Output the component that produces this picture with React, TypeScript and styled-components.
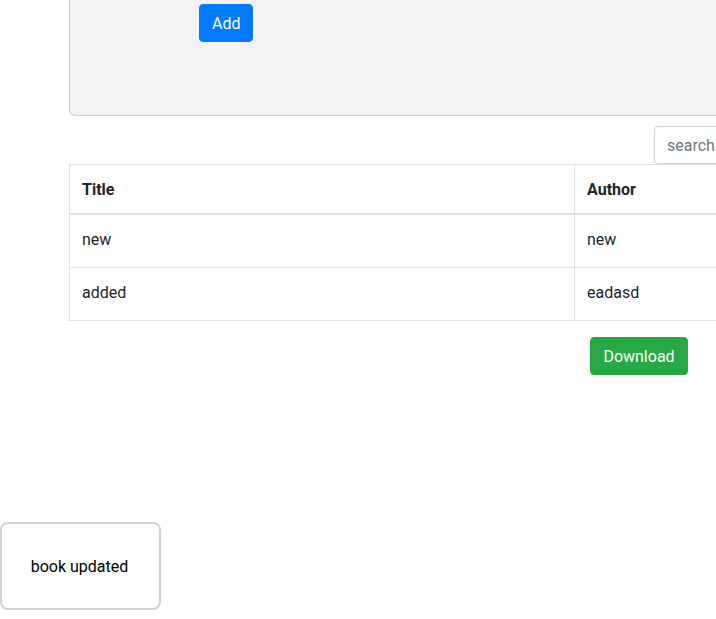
import React from "react";
import styled, { createGlobalStyle } from "styled-components";

const Global = createGlobalStyle`
  html, body { margin: 0; padding: 0; overflow: hidden; background: #fff; }
  body { font-family: Roboto, "Liberation Sans", sans-serif; font-size: 16px; line-height: 1.5; color: #212529; }
  * { box-sizing: border-box; }
`;

const Container = styled.div`
  margin-left: 69px;
  width: 1140px;
  display: flex;
  flex-direction: column;
`;

const Panel = styled.div`
  height: 116px;
  background: #f3f3f3;
  border: 1px solid #d0d0d0;
  border-top: none;
  border-radius: 0 0 6px 6px;
  padding: 4px 0 0 129px;
`;

const Button = styled.button<{ $variant: "primary" | "success" }>`
  font-family: inherit;
  font-size: 16px;
  line-height: 24px;
  padding: 7px 12px 5px;
  border: 1px solid ${(p) => (p.$variant === "primary" ? "#007bff" : "#28a745")};
  background: ${(p) => (p.$variant === "primary" ? "#007bff" : "#28a745")};
  color: #fff;
  border-radius: 4px;
  cursor: pointer;
`;

const SearchRow = styled.div`
  display: flex;
  padding: 10px 0 0 585px;
  height: 48px;
`;

const SearchInput = styled.input`
  width: 200px;
  height: 38px;
  font-family: inherit;
  font-size: 16px;
  padding: 6px 12px;
  border: 1px solid #ced4da;
  border-radius: 4px;
  color: #495057;
  &::placeholder { color: #6c757d; }
`;

const Table = styled.table`
  width: 100%;
  border-collapse: collapse;
  color: #212529;
`;

const Th = styled.th<{ $w?: number }>`
  text-align: left;
  font-weight: 700;
  padding: 13px 12px 11px;
  line-height: 24px;
  border: 1px solid #dee2e6;
  border-bottom: 2px solid #dee2e6;
  width: ${(p) => (p.$w ? `${p.$w}px` : "auto")};
`;

const Td = styled.td`
  padding: 13px 12px 15px;
  line-height: 24px;
  border: 1px solid #dee2e6;
`;

const Footer = styled.div`
  display: flex;
  justify-content: center;
  padding-top: 16px;
`;

const Toast = styled.div`
  position: fixed;
  left: 0;
  bottom: 9px;
  width: 161px;
  height: 88px;
  background: #fff;
  border: 2px solid #d3d3d3;
  border-radius: 8px;
  display: flex;
  align-items: center;
  justify-content: center;
  padding: 2px 2px 0 0;
  font-size: 16px;
  color: #000;
`;

const rows = [
  { title: "new", author: "new" },
  { title: "added", author: "eadasd" },
];

export default function App() {
  return (
    <>
      <Global />
      <Container>
        <Panel>
          <Button $variant="primary">Add</Button>
        </Panel>
        <SearchRow>
          <SearchInput placeholder="search" />
        </SearchRow>
        <Table>
          <thead>
            <tr>
              <Th $w={505}>Title</Th>
              <Th $w={400}>Author</Th>
              <Th>Actions</Th>
            </tr>
          </thead>
          <tbody>
            {rows.map((r, i) => (
              <tr key={i}>
                <Td>{r.title}</Td>
                <Td>{r.author}</Td>
                <Td></Td>
              </tr>
            ))}
          </tbody>
        </Table>
        <Footer>
          <Button $variant="success">Download</Button>
        </Footer>
      </Container>
      <Toast>book updated</Toast>
    </>
  );
}
